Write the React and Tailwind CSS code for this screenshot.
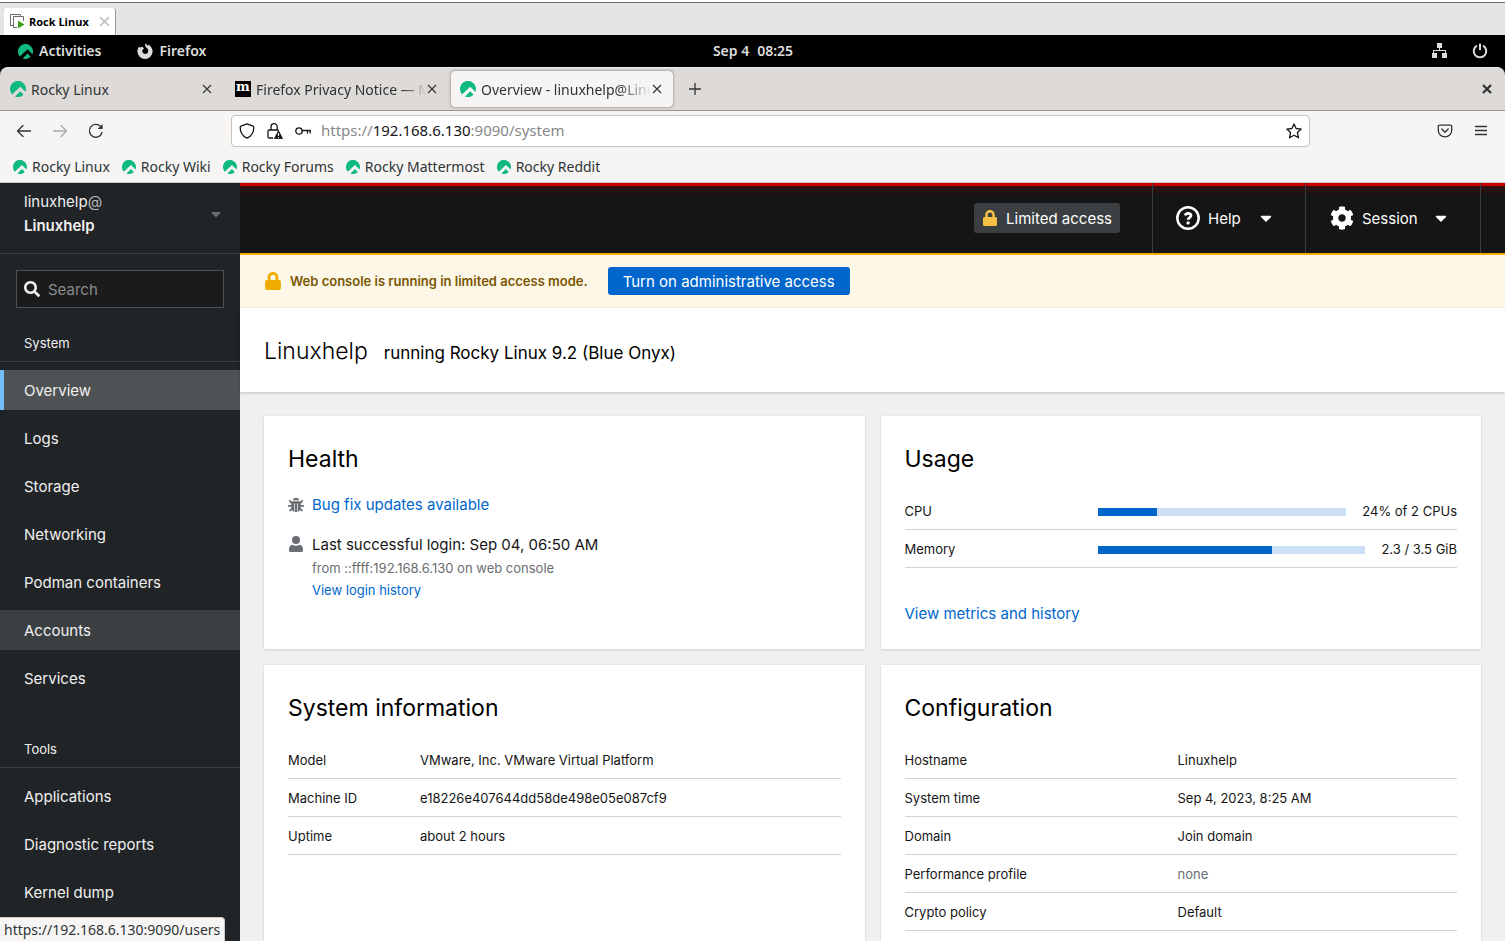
import React from "react";
import { FaLock, FaSearch, FaCaretDown, FaCog } from "react-icons/fa";

function RockyLogo({ className }) {
  return (
    <svg viewBox="0 0 512 512" className={className} fill="#10b981" aria-hidden="true">
      <path d="M66 428A256 256 0 1 1 494 346L327 180z" />
      <path d="M160 493L327 326L432 436A256 256 0 0 1 160 493z" />
    </svg>
  );
}

function CloseIcon({ className, width = 1.1 }) {
  return (
    <svg viewBox="0 0 10 10" className={className} fill="none" stroke="currentColor" strokeWidth={width} aria-hidden="true">
      <path d="M1 1l8 8M9 1L1 9" />
    </svg>
  );
}

function VmIcon() {
  return (
    <svg viewBox="0 0 15 15" className="h-[15px] w-[15px]" fill="none" aria-hidden="true">
      <path d="M3.500 11.500H.5V.5h10v2" stroke="#6b6b6b" />
      <path d="M7 13.500H3.500v-11h10V7" stroke="#6b6b6b" />
      <path d="M8 6.500l6.500 4L8 14.500z" fill="#3f9c14" />
    </svg>
  );
}

function FirefoxIcon() {
  return (
    <svg viewBox="0 0 16 16" className="h-4 w-4" aria-hidden="true">
      <path
        fill="#dcdcdc"
        d="M8.600.2c1 .8 1.500 1.700 1.700 2.700.5-.3.800-.7.900-1.300 2.700 1.500 4.400 4 4.400 6.900A7.600 7.600 0 0 1 8 16 7.600 7.600 0 0 1 .4 8.400c0-2 .6-3.700 1.700-5 .1.500.3.900.6 1.200.9-.7 2-.9 3-.5L7 5.600 5.400 6.900c-.5 2.100.7 4 2.700 4 1.800 0 3.100-1.300 3.100-3 0-1.900-1-2.600-2-3.400C8 3.500 7.600 1.900 8.600.2z"
      />
    </svg>
  );
}

function NetworkIcon() {
  return (
    <svg viewBox="0 0 16 16" className="h-4 w-4" fill="#dcdcdc" aria-hidden="true">
      <path d="M5 0h5v5H8v2h6v3h1v5h-5v-5h3V8H2v2h3v5H0v-5h1V7h6V5H5z" />
    </svg>
  );
}

function PowerIcon() {
  return (
    <svg viewBox="0 0 16 16" className="h-4 w-4" fill="none" stroke="#dcdcdc" strokeWidth="2" aria-hidden="true">
      <path d="M5 2.700a6.200 6.200 0 1 0 6 0M8 .5v6.500" />
    </svg>
  );
}

function BackIcon() {
  return (
    <svg viewBox="0 0 16 16" className="h-4 w-4" fill="none" stroke="currentColor" strokeWidth="1.300" strokeLinecap="round" strokeLinejoin="round" aria-hidden="true">
      <path d="M14.500 8H1.500M7 2.500L1.500 8 7 13.500" />
    </svg>
  );
}

function ReloadIcon() {
  return (
    <svg viewBox="0 0 16 16" className="h-4 w-4" fill="none" stroke="currentColor" strokeWidth="1.300" strokeLinecap="round" aria-hidden="true">
      <path d="M14 9.500A6.400 6.400 0 1 1 12.700 3.700" />
      <path d="M14.600 1v5H9.600z" fill="currentColor" stroke="none" />
    </svg>
  );
}

function ShieldIcon() {
  return (
    <svg viewBox="0 0 16 16" className="h-4 w-4" fill="none" stroke="#15141a" strokeWidth="1.300" strokeLinejoin="round" aria-hidden="true">
      <path d="M8 .8l6 2.400c.6.200.8.600.8 1.100 0 4-1.400 8.500-6.800 10.900C2.600 12.800 1.200 8.300 1.200 4.300c0-.5.200-.9.800-1.100z" />
    </svg>
  );
}

function LockWarningIcon() {
  return (
    <svg viewBox="0 0 16 16" className="h-4 w-4" aria-hidden="true">
      <path d="M4 7V3.800a3.100 3.100 0 0 1 6.200 0V7M6 15H2.300A1.300 1.300 0 0 1 1 13.700V8.300A1.300 1.300 0 0 1 2.300 7h9.200" fill="none" stroke="#15141a" strokeWidth="1.300" />
      <path d="M11.500 7.500L15.700 15.700H7.300z" fill="#15141a" stroke="#15141a" strokeLinejoin="round" strokeWidth=".6" />
      <path d="M11.500 10v3M11.500 14v1" stroke="#fff" strokeWidth="1.100" />
    </svg>
  );
}

function KeyIcon() {
  return (
    <svg viewBox="0 0 16 16" className="h-4 w-4" fill="none" stroke="#15141a" strokeWidth="1.300" strokeLinecap="round" strokeLinejoin="round" aria-hidden="true">
      <circle cx="4" cy="8" r="3.200" />
      <path d="M7.200 7.500h8v2.500M12.500 7.500V10" />
    </svg>
  );
}

function StarIcon() {
  return (
    <svg viewBox="0 0 16 16" className="h-4 w-4" fill="none" stroke="#15141a" strokeWidth="1.300" strokeLinejoin="round" aria-hidden="true">
      <path d="M8 .9l2.100 4.600 5.100.6-3.800 3.400 1.100 5.300L8 12.300l-4.500 2.500 1.100-5.300L.8 6.100l5.100-.6z" />
    </svg>
  );
}

function PocketIcon() {
  return (
    <svg viewBox="0 0 16 16" className="h-4 w-4" fill="none" stroke="#2e3436" strokeWidth="1.300" strokeLinecap="round" strokeLinejoin="round" aria-hidden="true">
      <path d="M2.500 2.200h11c.7 0 1.200.5 1.200 1.200V7.500a6.700 6.300 0 0 1-13.400 0V3.400c0-.7.500-1.200 1.200-1.200z" />
      <path d="M4.800 6L8 9.200 11.200 6" />
    </svg>
  );
}

function BugIcon() {
  return (
    <svg viewBox="0 0 16 16" className="h-4 w-4" fill="#6a6e73" aria-hidden="true">
      <path d="M4.600 3.200a3.500 3.200 0 0 1 6.800 0z" />
      <path d="M3 4.200h10l1-1.700 1.200.8-1.400 2.900H12.700v1.800H16v1.800h-3.300v1.200l2.300 2.500-1.200 1.200-1.600-1.700c-.6 1-1.400 1.700-2.500 2V6.500H9V15H7V6.500h-.7v8.500c-1.100-.3-1.900-1-2.500-2l-1.600 1.700L1 13.500 3.300 11V9.800H0V8h3.300V6.200H2.200L.8 3.300 2 2.500z" />
    </svg>
  );
}

function UserIcon() {
  return (
    <svg viewBox="0 0 16 16" className="h-4 w-4" fill="#6a6e73" aria-hidden="true">
      <circle cx="8" cy="4" r="4" />
      <path d="M4.500 8.800c2 1.300 5 1.300 7 0 2.200.3 3.500 2 3.500 4.200v1.500c0 .9-.6 1.500-1.500 1.500h-11C1.600 16 1 15.400 1 14.500V13c0-2.200 1.300-3.900 3.500-4.200z" />
    </svg>
  );
}

function HelpIcon() {
  return (
    <svg viewBox="0 0 24 24" className="h-6 w-6" fill="none" stroke="#fff" aria-hidden="true">
      <circle cx="12" cy="12" r="10.700" strokeWidth="2.500" />
      <path d="M9 9.400C9.600 8 10.600 7.300 12 7.300c1.700 0 3 .9 3 2.300 0 2-2.900 1.900-2.900 4.200" strokeWidth="2.700" />
      <circle cx="12.100" cy="16.900" r="1.700" fill="#fff" stroke="none" />
    </svg>
  );
}

const toolPages = ["Applications", "Diagnostic reports", "Kernel dump"];
const systemPages = ["Overview", "Logs", "Storage", "Networking", "Podman containers", "Accounts", "Services"];
const bookmarks = ["Rocky Linux", "Rocky Wiki", "Rocky Forums", "Rocky Mattermost", "Rocky Reddit"];
const systemInfo = [
  ["Model", "VMware, Inc. VMware Virtual Platform"],
  ["Machine ID", "e18226e407644dd58de498e05e087cf9"],
  ["Uptime", "about 2 hours"],
];
const configuration = [
  ["Hostname", "Linuxhelp"],
  ["System time", "Sep 4, 2023, 8:25 AM"],
  ["Domain", "Join domain"],
  ["Performance profile", "none"],
  ["Crypto policy", "Default"],
];
const usage = [
  { label: "CPU", value: "24% of 2 CPUs", share: 24 },
  { label: "Memory", value: "2.3 / 3.5 GiB", share: 65 },
];

function NavSection({ title, items, active, hovered }) {
  return (
    <section>
      <h2 className="border-b border-[#3c3f42] px-6 pb-2 text-[13px] leading-5">{title}</h2>
      <ul className="flex flex-col gap-2 pt-2">
        {items.map((item) => (
          <li key={item}>
            <a
              href={"#" + item}
              className={
                "block border-l-4 pt-[9px] pb-[7px] pl-5 text-[15px] leading-6 " +
                (item === active
                  ? "border-[#73bcf7] bg-[#4f5255]"
                  : item === hovered
                    ? "border-[#3c3f42] bg-[#3c3f42]"
                    : "border-transparent")
              }
            >
              {item}
            </a>
          </li>
        ))}
      </ul>
    </section>
  );
}

function Card({ title, children }) {
  return (
    <section className="bg-white px-6 pt-[25px] shadow-[0_1px_2px_rgba(3,3,3,0.12),0_0_2px_rgba(3,3,3,0.06)]">
      <h2 className="text-[23px] leading-9 text-black">{title}</h2>
      {children}
    </section>
  );
}

function InfoTable({ rows, labelClass }) {
  return (
    <table className="mt-[15px] w-full text-left text-[13px] leading-[21px]">
      <tbody>
        {rows.map(([label, value]) => (
          <tr key={label} className="border-b border-[#d2d2d2]">
            <th scope="row" className={"pt-[9px] pb-[7px] font-normal " + labelClass}>{label}</th>
            <td className={"pt-[9px] pb-[7px] " + (value === "none" ? "text-[#6a6e73]" : "")}>{value}</td>
          </tr>
        ))}
      </tbody>
    </table>
  );
}

export default function App() {
  return (
    <div className="flex h-screen min-w-[1100px] flex-col overflow-hidden bg-[#e3e4e6] font-['Inter',sans-serif] text-[#151515]">
      <div className="flex h-[35px] shrink-0 items-end border-t-2 border-white">
        <div className="flex h-full w-full items-end border-t border-[#6b6b6b] pl-1">
          <div className="flex h-[27px] items-center rounded-t-[3px] border-r border-[#9a9a9a] bg-white pr-[5px] pl-1.5 font-['Open_Sans',sans-serif] text-[11px] font-bold text-black">
            <VmIcon />
            <span className="ml-1 leading-4">Rock Linux</span>
            <button type="button" aria-label="Close machine" className="ml-2.5 text-[#c4c4c4]">
              <CloseIcon className="h-[11px] w-[11px]" width={1.8} />
            </button>
          </div>
        </div>
      </div>

      <header className="grid h-8 shrink-0 grid-cols-[1fr_auto_1fr] items-center bg-black pr-[17px] pl-[18px] font-['Noto_Sans',sans-serif] text-sm font-semibold text-[#dcdcdc]">
        <div className="flex items-center gap-9">
          <button type="button" className="flex items-center gap-1.5">
            <RockyLogo className="h-[15px] w-[15px]" />
            Activities
          </button>
          <button type="button" className="flex items-center gap-1.5">
            <FirefoxIcon />
            Firefox
          </button>
        </div>
        <time className="flex gap-2"><span>Sep 4</span><span>08:25</span></time>
        <div className="flex items-center justify-end gap-6">
          <NetworkIcon />
          <PowerIcon />
        </div>
      </header>

      <div className="shrink-0 bg-black font-['Noto_Sans',sans-serif] text-sm text-[#2e3436]">
        <div className="flex h-11 items-center rounded-t-lg border-t border-b border-t-[#f0eeec] border-b-[#979491] bg-[#dedad7] pr-[13px]">
          <div className="flex h-9 w-[226px] items-center pl-2.5">
            <RockyLogo className="h-4 w-4" />
            <span className="ml-[5px] flex-1 pt-px">Rocky Linux</span>
            <button type="button" aria-label="Close tab" className="mr-3.5"><CloseIcon className="h-[10px] w-[10px]" /></button>
          </div>
          <div className="flex h-9 w-[225px] items-center pl-[9px]">
            <span className="flex h-4 w-4 items-center justify-center bg-black pb-1 font-['DejaVu_Serif',serif] text-[13px] leading-3 font-bold text-white">
              m
            </span>
            <span className="ml-[5px] flex-1 overflow-hidden pt-px whitespace-nowrap [mask-image:linear-gradient(to_right,black_85%,transparent)]">Firefox Privacy Notice — Mozilla</span>
            <button type="button" aria-label="Close tab" className="mr-3.5"><CloseIcon className="h-[10px] w-[10px]" /></button>
          </div>
          <div className="flex h-9 w-[222px] items-center rounded border border-[#f6f5f4] bg-[#f6f5f4] pl-2 shadow-[0_0_3px_rgba(0,0,0,0.45)]">
            <RockyLogo className="h-4 w-4" />
            <span className="ml-[5px] flex-1 overflow-hidden pt-px whitespace-nowrap [mask-image:linear-gradient(to_right,black_80%,transparent)]">Overview - linuxhelp@Linuxhelp</span>
            <button type="button" aria-label="Close tab" className="mr-2.5"><CloseIcon className="h-[10px] w-[10px]" /></button>
          </div>
          <button type="button" aria-label="New tab" className="ml-4">
            <svg viewBox="0 0 12 12" className="h-3 w-3" fill="none" stroke="#2e3436" strokeWidth="1.300" aria-hidden="true"><path d="M6 0v12M0 6h12" /></svg>
          </button>
          <button type="button" aria-label="Close window" className="ml-auto"><CloseIcon className="h-[10px] w-[10px]" width={2.2} /></button>
        </div>

        <div className="border-b border-[#ccc8c4] bg-[#f6f5f4]">
          <div className="flex h-10 items-center px-4">
            <div className="flex w-[215px] items-center gap-5">
              <button type="button" aria-label="Back"><BackIcon /></button>
              <button type="button" aria-label="Forward" className="rotate-180 text-[#aaa9a8]"><BackIcon /></button>
              <button type="button" aria-label="Reload"><ReloadIcon /></button>
            </div>
            <div className="flex h-8 flex-1 items-center rounded border border-[#c6c1ba] bg-white px-[7px]">
              <ShieldIcon />
              <span className="ml-3"><LockWarningIcon /></span>
              <span className="ml-3"><KeyIcon /></span>
              <div className="ml-2.5 flex-1 text-[15px] text-[#86888a]">
                https://<span className="text-[#15141a]">192.168.6.130</span>:9090/system
              </div>
              <button type="button" aria-label="Bookmark this page"><StarIcon /></button>
            </div>
            <div className="ml-[127px] flex items-center gap-5">
              <button type="button" aria-label="Save to Pocket"><PocketIcon /></button>
              <button type="button" aria-label="Menu">
                <svg viewBox="0 0 16 16" className="h-4 w-4" fill="none" stroke="#2e3436" strokeWidth="1.300" aria-hidden="true"><path d="M2 3.500h12M2 7.500h12M2 11.500h12" /></svg>
              </button>
            </div>
          </div>
          <nav className="flex h-[31px] items-center gap-3 pl-[13px]" aria-label="Bookmarks">
            {bookmarks.map((name) => (
              <a key={name} href={"#" + name} className="flex items-center gap-[5px]">
                <RockyLogo className="h-[14px] w-[14px]" />
                {name}
              </a>
            ))}
          </nav>
        </div>
      </div>

      <div className="flex min-h-0 flex-1">
        <aside className="w-60 shrink-0 overflow-hidden bg-[#212427] text-[#f0f0f0]">
          <button type="button" className="flex h-[71px] w-full items-center justify-between border-b border-[#3c3f42] pr-[18px] pb-2 pl-6 text-left text-[15px] leading-6">
            <span>
              <span className="block">linuxhelp<span className="text-[#b8bbbe]">@</span></span>
              <span className="block font-semibold">Linuxhelp</span>
            </span>
            <FaCaretDown className="h-4 w-3 text-[#6a6e73]" />
          </button>
          <label className="mx-4 mt-4 flex h-[38px] items-center gap-2 border border-[#4f5255] bg-[#1b1b1b] pr-2 pl-[7px]">
            <FaSearch className="h-4 w-4 shrink-0" />
            <span className="sr-only">Search pages</span>
            <input type="search" placeholder="Search" className="h-8 w-full bg-transparent pt-px text-[15px] outline-none placeholder:text-[#8a8d90]" />
          </label>
          <div className="flex flex-col gap-[41px] pt-[25px]">
            <NavSection title="System" items={systemPages} active="Overview" hovered="Accounts" />
            <NavSection title="Tools" items={toolPages} />
          </div>
        </aside>

        <main className="flex min-w-0 flex-1 flex-col bg-[#f0f0f0]">
          <div className="flex h-[70px] shrink-0 items-stretch justify-end bg-[linear-gradient(to_bottom,#cc0000_3px,#3a1012_3px,#151515_12px)] text-[15px] text-white">
            <div className="flex items-center pr-8">
              <button type="button" className="flex h-[30px] items-center gap-2 rounded-[3px] bg-[#3c3f42] px-2">
                <FaLock className="h-4 w-4 text-[#f4c145]" />
                <span className="pt-0.5">Limited access</span>
              </button>
            </div>
            <button type="button" className="flex w-[153px] items-center gap-2 border-l border-[#3c3f42] pl-[23px]">
              <HelpIcon />
              <span className="pt-0.5">Help</span>
              <FaCaretDown className="ml-2 h-[18px] w-[18px]" />
            </button>
            <button type="button" className="flex w-[175px] items-center gap-2 border-l border-[#3c3f42] pl-6">
              <FaCog className="h-6 w-6" />
              <span className="pt-0.5">Session</span>
              <FaCaretDown className="ml-1.5 h-[18px] w-[18px]" />
            </button>
            <div className="w-[25px] border-l border-[#3c3f42]" />
          </div>

          <div className="flex h-[55px] shrink-0 items-center border-t-2 border-[#f0ab00] bg-[#fdf7e7] pb-px pl-6">
            <FaLock className="h-[18px] w-[18px] text-[#f0ab00]" />
            <strong className="ml-2 pt-0.5 text-[13px] font-semibold text-[#795600]">Web console is running in limited access mode.</strong>
            <button type="button" className="ml-5 h-7 rounded-[3px] bg-[#06c] px-[15px] pt-0.5 text-[15px] text-white">Turn on administrative access</button>
          </div>

          <div className="flex h-21 shrink-0 items-baseline gap-4 bg-white px-6 pt-[25px] text-black shadow-[0_1px_3px_rgba(3,3,3,0.2)]">
            <h1 className="text-[23px] leading-9 font-light">Linuxhelp</h1>
            <span className="text-[17px]">running Rocky Linux 9.2 (Blue Onyx)</span>
          </div>

          <div className="grid min-h-0 flex-1 grid-cols-2 grid-rows-[233px_auto] gap-4 px-6 pt-6">
            <Card title="Health">
              <ul className="mt-4 flex flex-col gap-4 text-[15px] leading-6">
                <li className="flex items-center gap-2">
                  <BugIcon />
                  <a href="#updates" className="text-[#06c]">Bug fix updates available</a>
                </li>
                <li className="flex items-start gap-2">
                  <span className="pt-[3px]"><UserIcon /></span>
                  <div>
                    <div>Last successful login: Sep 04, 06:50 AM</div>
                    <div className="text-[13px] leading-[22px] text-[#6a6e73]">from ::ffff:192.168.6.130 on web console</div>
                    <a href="#history" className="block text-[13px] leading-[22px] text-[#06c]">View login history</a>
                  </div>
                </li>
              </ul>
            </Card>

            <Card title="Usage">
              <table className="mt-[15px] w-full text-left text-[13px] leading-[21px]">
                <tbody>
                  {usage.map((row) => (
                    <tr key={row.label} className="border-b border-[#d2d2d2]">
                      <th scope="row" className="w-[35%] pt-[9px] pb-[7px] font-normal">{row.label}</th>
                      <td className="pt-[9px] pb-[7px]">
                        <div className="flex items-center gap-4">
                          <div role="meter" aria-label={row.label} aria-valuenow={row.share} className="h-2 flex-1 bg-[#cce0f5]">
                            <div className="h-full bg-[#06c]" style={{ width: row.share + "%" }} />
                          </div>
                          <span>{row.value}</span>
                        </div>
                      </td>
                    </tr>
                  ))}
                </tbody>
              </table>
              <a href="#metrics" className="mt-[34px] block text-[15px] leading-6 text-[#06c]">View metrics and history</a>
            </Card>

            <Card title="System information">
              <InfoTable rows={systemInfo} labelClass="w-[132px]" />
            </Card>
            <Card title="Configuration">
              <InfoTable rows={configuration} labelClass="w-[273px]" />
            </Card>
          </div>
        </main>
      </div>

      <div className="fixed bottom-0 left-0 rounded-tr border-t border-r border-[#ccc8c4] bg-[#f6f5f4] px-1 pt-px font-['Noto_Sans',sans-serif] text-sm leading-[22px] text-[#2e3436]">
        https://192.168.6.130:9090/users
      </div>
    </div>
  );
}
